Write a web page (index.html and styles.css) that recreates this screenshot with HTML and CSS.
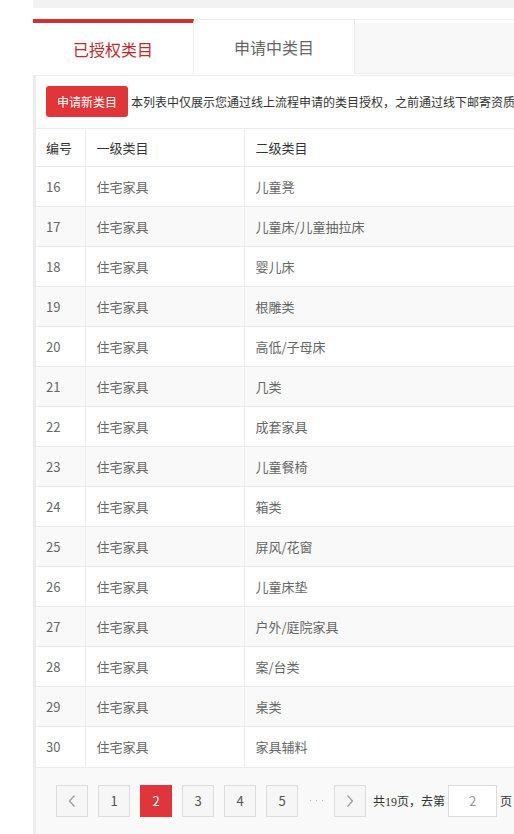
FILE: index.html
```html
<!DOCTYPE html>
<html lang="zh">
<head>
<meta charset="utf-8">
<title>类目授权</title>
<link rel="stylesheet" href="styles.css">
</head>
<body>
<div class="page">
  <div class="topbar"></div>
  <div class="tabs">
    <div class="tab active">已授权类目</div>
    <div class="tab">申请中类目</div>
    <div class="tab-fill"></div>
  </div>
  <div class="panel">
    <div class="toolbar">
      <button class="btn-apply">申请新类目</button>
      <span class="notice">本列表中仅展示您通过线上流程申请的类目授权，之前通过线下邮寄资质申请的类目授权请在类目管理中查看</span>
    </div>
    <table class="grid">
      <thead>
        <tr><th class="c1">编号</th><th class="c2">一级类目</th><th class="c3">二级类目</th></tr>
      </thead>
      <tbody>
        <tr><td>16</td><td>住宅家具</td><td>儿童凳</td></tr>
        <tr><td>17</td><td>住宅家具</td><td>儿童床/儿童抽拉床</td></tr>
        <tr><td>18</td><td>住宅家具</td><td>婴儿床</td></tr>
        <tr><td>19</td><td>住宅家具</td><td>根雕类</td></tr>
        <tr><td>20</td><td>住宅家具</td><td>高低/子母床</td></tr>
        <tr><td>21</td><td>住宅家具</td><td>几类</td></tr>
        <tr><td>22</td><td>住宅家具</td><td>成套家具</td></tr>
        <tr><td>23</td><td>住宅家具</td><td>儿童餐椅</td></tr>
        <tr><td>24</td><td>住宅家具</td><td>箱类</td></tr>
        <tr><td>25</td><td>住宅家具</td><td>屏风/花窗</td></tr>
        <tr><td>26</td><td>住宅家具</td><td>儿童床垫</td></tr>
        <tr><td>27</td><td>住宅家具</td><td>户外/庭院家具</td></tr>
        <tr><td>28</td><td>住宅家具</td><td>案/台类</td></tr>
        <tr><td>29</td><td>住宅家具</td><td>桌类</td></tr>
        <tr><td>30</td><td>住宅家具</td><td>家具辅料</td></tr>
      </tbody>
    </table>
    <div class="pager">
      <span class="pg arrow"><svg width="10" height="14" viewBox="0 0 10 14"><path d="M7.5 1.5 L2.5 7 L7.5 12.5" fill="none" stroke="#999" stroke-width="1.2"/></svg></span>
      <span class="pg">1</span>
      <span class="pg current">2</span>
      <span class="pg">3</span>
      <span class="pg">4</span>
      <span class="pg">5</span>
      <span class="dots"><i></i><i></i><i></i></span>
      <span class="pg arrow"><svg width="10" height="14" viewBox="0 0 10 14"><path d="M2.5 1.5 L7.5 7 L2.5 12.5" fill="none" stroke="#999" stroke-width="1.2"/></svg></span>
      <span class="total">共19页，去第</span>
      <span class="goto">2</span>
      <span class="unit">页</span>
    </div>
  </div>
</div>
</body>
</html>
```
FILE: styles.css
```css
html, body {
  margin: 0;
  padding: 0;
  background: #fff;
  overflow: hidden;
}
body {
  font-family: "Noto Sans CJK SC", "Noto Sans", sans-serif;
  color: #666;
}
.page {
  padding-left: 33px;
  width: 900px;
}
.topbar {
  height: 8px;
  background: #f2f2f2;
}
.tabs {
  display: flex;
  margin-top: 11px;
  height: 55px;
  border-top: 1px solid #ececec;
  border-left: 1px solid #ececec;
  box-sizing: border-box;
}
.tab {
  width: 161px;
  box-sizing: border-box;
  display: flex;
  align-items: center;
  justify-content: center;
  font-size: 16px;
  color: #666;
  background: #fff;
  border-right: 1px solid #ececec;
}
.tab.active {
  width: 161px;
  margin-top: -1px;
  margin-left: -1px;
  border-top: 4px solid #d2302f;
  color: #c3272b;
  border-right: 1px solid #f0f0f0;
}
.tab-fill {
  flex: 1;
  margin-top: 3px;
  background: #f8f8f8;
  border-bottom: 1px solid #ececec;
}
.panel {
  margin-top: 1px;
  border-left: 3px solid #ececec;
  border-top: 1px solid #f0f0f0;
}
.toolbar {
  display: flex;
  align-items: center;
  padding: 10px 0 11px 10px;
  white-space: nowrap;
}
.btn-apply {
  height: 31px;
  width: 82px;
  border: none;
  border-radius: 3px;
  background: #e0363a;
  color: #fff;
  font-family: inherit;
  font-size: 12px;
  padding: 0;
  margin-right: 3px;
}
.notice {
  font-size: 12px;
  color: #333;
}
.grid {
  border-collapse: collapse;
  width: 860px;
  font-size: 13px;
}
.grid th, .grid td {
  text-align: left;
  border-top: 1px solid #ececec;
  border-right: 1px solid #ececec;
  padding: 0 0 0 10px;
  height: 40px;
  box-sizing: border-box;
  font-weight: normal;
}
.grid th {
  height: 38px;
  color: #333;
}
.grid .c1 { width: 49px; }
.grid .c2 { width: 159px; }
.grid td:nth-child(2), .grid th:nth-child(2),
.grid td:nth-child(3), .grid th:nth-child(3) {
  padding-left: 11px;
}
.grid td {
  color: #666;
}
.grid tbody tr:nth-child(even) td {
  background: #f9f9f9;
}
.pager {
  display: flex;
  align-items: center;
  height: 67px;
  padding-left: 20px;
  background: #f9f9f9;
  border-top: 1px solid #ececec;
  box-sizing: border-box;
  font-size: 13px;
}
.pg {
  width: 32px;
  height: 32px;
  box-sizing: border-box;
  border: 1px solid #dcdcdc;
  background: #f6f6f6;
  display: flex;
  align-items: center;
  justify-content: center;
  color: #555;
  margin-right: 10px;
}
.pg.current {
  background: #e0353a;
  border-color: #e0353a;
  color: #fff;
}
.dots {
  width: 20px;
  margin: 0 8px 0 -2px;
  display: flex;
  justify-content: center;
  gap: 5px;
}
.dots i {
  width: 1px;
  height: 1px;
  background: #bbb;
}
.total {
  margin-left: -3px;
  font-size: 12px;
  color: #333;
  font-family: "Liberation Serif", "Noto Sans CJK SC", serif;
}
.goto {
  width: 49px;
  height: 32px;
  box-sizing: border-box;
  border: 1px solid #dcdcdc;
  background: #fff;
  display: flex;
  align-items: center;
  justify-content: center;
  color: #999;
  margin-left: 3px;
}
.unit {
  margin-left: 3px;
  font-size: 12px;
  color: #333;
}
```
